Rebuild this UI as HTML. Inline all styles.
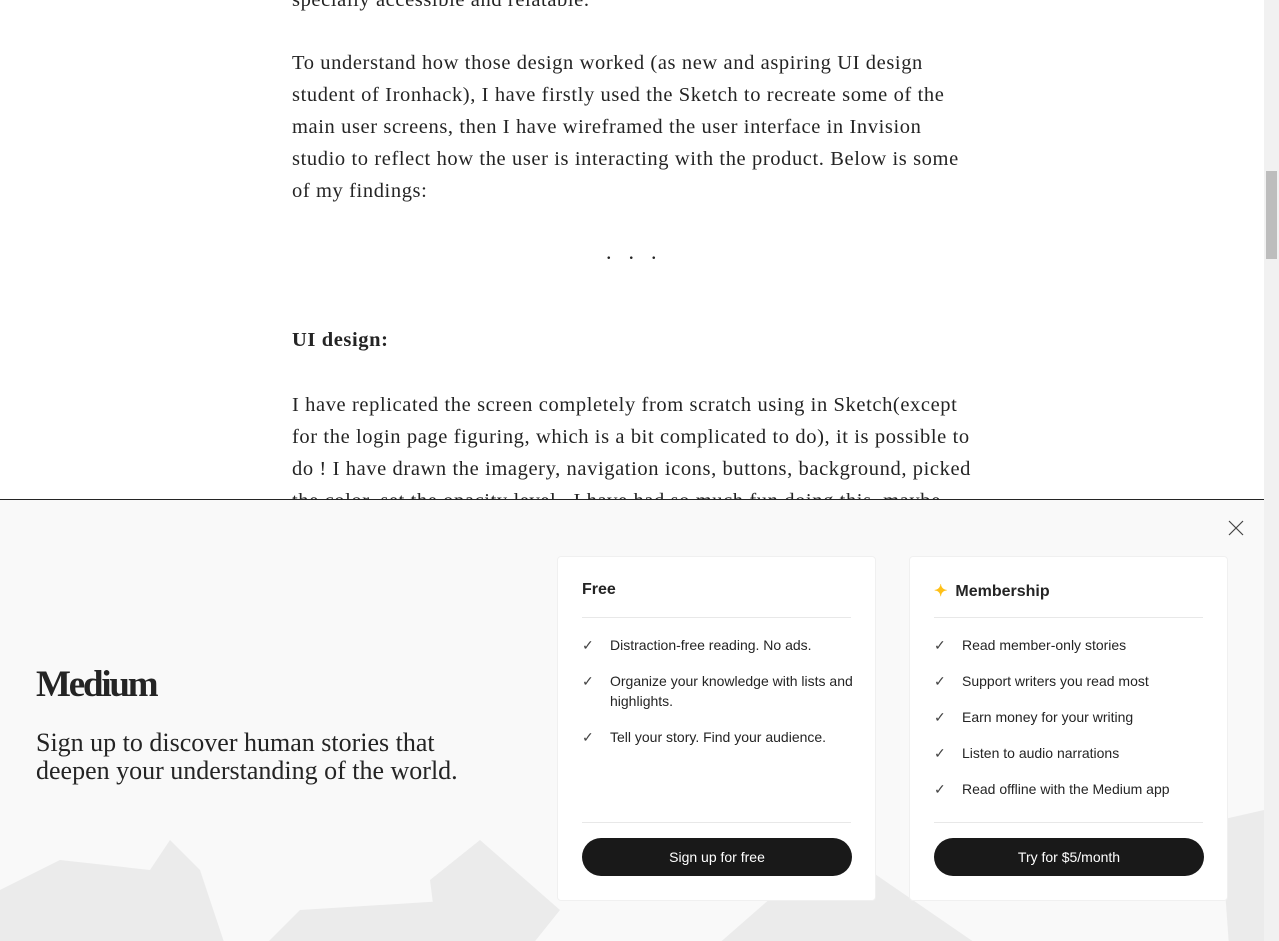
<!DOCTYPE html>
<html><head><meta charset="utf-8"><style>
*{margin:0;padding:0;box-sizing:border-box}
body{width:1279px;height:941px;overflow:hidden;background:#fff;position:relative;font-family:"Liberation Sans",sans-serif;color:#242424}
.art{position:absolute;left:292px;top:0;width:720px;font-family:"Liberation Serif",serif;font-size:20.5px;line-height:32px;color:#242424;letter-spacing:0.6px;white-space:nowrap}
.art p{position:absolute;left:0}
.sb{position:absolute;left:1264px;top:0;width:15px;height:941px;background:#f1f1f1}
.thumb{position:absolute;left:1266px;top:171px;width:11px;height:88px;background:#bdbdbd}
.ov{position:absolute;left:0;top:499px;width:1264px;height:442px;background:#f9f9f9;border-top:1px solid #242424;overflow:hidden}
.card{position:absolute;top:56px;width:319px;height:345px;background:#fff;border-radius:4px;border:1px solid #f0f0f0}
.card h3{position:absolute;left:24px;top:24px;font-size:16px;font-weight:bold;color:#242424}
.card .hr{position:absolute;left:24px;right:24px;height:1px;background:#e8e8e8}
.li{position:absolute;left:24px;font-size:14px;line-height:20px;color:#242424}
.li span{position:absolute;left:28px;width:250px}
.li i{font-style:normal;position:absolute;left:0;top:0;color:#444}
.btn{position:absolute;left:24px;top:281px;width:270px;height:38px;border-radius:19px;background:#191919;color:#fff;font-size:14px;text-align:center;line-height:38px}
</style></head><body>
<div class="art">
<p style="top:-16px">specially accessible and relatable.</p>
<p style="top:47px">To understand how those design worked (as new and aspiring UI design<br>student of Ironhack), I have firstly used the Sketch to recreate some of the<br>main user screens, then I have wireframed the user interface in Invision<br>studio to reflect how the user is interacting with the product. Below is some<br>of my findings:</p>
<p style="top:236px;left:314px;letter-spacing:17px;font-size:22px">...</p>
<p style="top:324px;font-weight:bold">UI design:</p>
<p style="top:389px">I have replicated the screen completely from scratch using in Sketch(except<br>for the login page figuring, which is a bit complicated to do), it is possible to<br>do ! I have drawn the imagery, navigation icons, buttons, background, picked<br>the color, set the opacity level...I have had so much fun doing this, maybe</p>
</div>
<div class="sb"></div><div class="thumb"></div>
<div class="ov">
<svg style="position:absolute;left:0;top:260px" width="1264" height="200"><g fill="#e6e6e6" opacity=".7">
<polygon points="0,130 60,100 150,110 170,80 200,110 230,200 0,200"/>
<polygon points="250,200 300,150 460,140 520,200"/>
<polygon points="430,120 480,80 560,150 520,200 440,200"/>
<polygon points="700,200 780,130 840,90 1000,200"/>
<polygon points="1220,60 1264,50 1264,200 1230,200"/>
</g></svg>
<div style="position:absolute;left:36px;top:163px;font-family:'Liberation Serif',serif;font-weight:bold;font-size:37px;letter-spacing:-2.2px;color:#242424">Medium</div>
<div style="position:absolute;left:36px;top:229px;font-family:'Liberation Serif',serif;font-size:26px;line-height:28px;color:#242424">Sign up to discover human stories that<br>deepen your understanding of the world.</div>
<svg style="position:absolute;left:1228px;top:20px" width="16" height="16"><path d="M1 1L15 15M15 1L1 15" stroke="#444" stroke-width="1.2"/></svg>
<div class="card" style="left:557px"><h3>Free</h3><div class="hr" style="top:60px"></div>
<div class="li" style="top:78px"><i>✓</i><span>Distraction-free reading. No ads.</span></div>
<div class="li" style="top:114px"><i>✓</i><span>Organize your knowledge with lists and highlights.</span></div>
<div class="li" style="top:170px"><i>✓</i><span>Tell your story. Find your audience.</span></div>
<div class="hr" style="top:265px"></div><div class="btn">Sign up for free</div></div>
<div class="card" style="left:909px"><h3><span style="color:#ffc017;margin-right:8px">✦</span>Membership</h3><div class="hr" style="top:60px"></div>
<div class="li" style="top:78px"><i>✓</i><span>Read member-only stories</span></div>
<div class="li" style="top:114px"><i>✓</i><span>Support writers you read most</span></div>
<div class="li" style="top:150px"><i>✓</i><span>Earn money for your writing</span></div>
<div class="li" style="top:186px"><i>✓</i><span>Listen to audio narrations</span></div>
<div class="li" style="top:222px"><i>✓</i><span>Read offline with the Medium app</span></div>
<div class="hr" style="top:265px"></div><div class="btn">Try for $5/month</div></div>
</div>
</body></html>
